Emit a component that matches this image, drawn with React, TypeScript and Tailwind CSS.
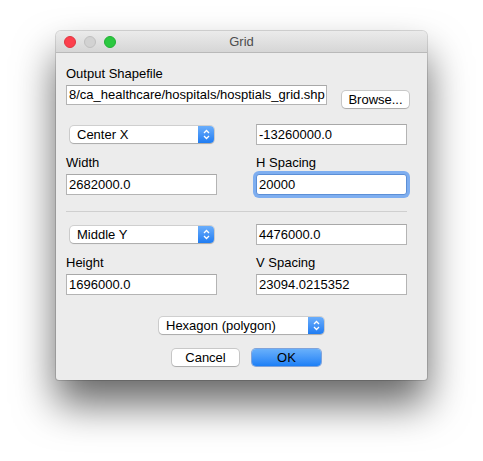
import React from "react";

const font = { fontFamily: '"Liberation Sans", Arial, sans-serif' };

function Field({ value, w, h = "h-[21px]", focused = false }: { value: string; w: string; h?: string; focused?: boolean }) {
  if (focused) {
    return (
      <div className={`${w} ${h} rounded-[3px] shadow-[0_0_0_3px_#7eaef0] border border-[#5c8fd6] bg-white flex items-center pl-[2px] text-[13px] text-black`}>
        {value}
      </div>
    );
  }
  return (
    <div className={`${w} ${h} border border-[#b4b4b4] border-t-[#a8a8a8] bg-white flex items-center pl-[2px] text-[13px] text-black`}>
      {value}
    </div>
  );
}

function Popup({ label, w }: { label: string; w: string }) {
  return (
    <div className={`${w} h-[17px] rounded-[4px] bg-white flex items-stretch shadow-[0_0_0_1px_rgba(0,0,0,0.12),0_1px_1px_rgba(0,0,0,0.18)]`}>
      <div className="flex-1 flex items-center pl-[7px] text-[13px] text-black">{label}</div>
      <div className="w-[16px] rounded-r-[4px] bg-gradient-to-b from-[#69adfb] to-[#1d7cf2] flex items-center justify-center">
        <svg width="7" height="11" viewBox="0 0 7 11">
          <path d="M1 4 L3.5 1.5 L6 4" stroke="white" strokeWidth="1.3" fill="none" />
          <path d="M1 7 L3.5 9.5 L6 7" stroke="white" strokeWidth="1.3" fill="none" />
        </svg>
      </div>
    </div>
  );
}

export default function App() {
  return (
    <div className="w-[483px] h-[461px] bg-white pl-[56px] pt-[31px]" style={font}>
      <div className="w-[371px] h-[349px] bg-[#ececec] rounded-t-[5px] rounded-b-[3px] shadow-[0_0_0_1px_rgba(0,0,0,0.14),0_24px_40px_rgba(0,0,0,0.6)] flex flex-col">
        {/* title bar */}
        <div className="h-[22px] rounded-t-[5px] bg-gradient-to-b from-[#ebebeb] to-[#d6d6d6] border-b border-[#b9b9b9] flex items-center relative">
          <div className="flex gap-[8px] pl-[8px]">
            <div className="w-[12px] h-[12px] rounded-full bg-[#fc3f4d] border border-[#e0353f]" />
            <div className="w-[12px] h-[12px] rounded-full bg-[#d2d2d2] border border-[#c0c0c0]" />
            <div className="w-[12px] h-[12px] rounded-full bg-[#2bc840] border border-[#21b133]" />
          </div>
          <div className="absolute inset-0 flex items-center justify-center pt-[1px] text-[13px] text-[#4d4d4d]">Grid</div>
        </div>

        <div className="flex flex-col pl-[10px]">
          <div className="mt-[13px] h-[16px] leading-[16px] text-[13px] text-black">Output Shapefile</div>
          <div className="mt-[3px] h-[20px] flex items-start">
            <Field w="w-[261px]" h="h-[20px]" value="8/ca_healthcare/hospitals/hosptials_grid.shp" />
            <div className="ml-[15px] mt-[6px] shrink-0 w-[67px] h-[17px] rounded-[4px] bg-white flex items-center justify-center text-[13px] text-black shadow-[0_0_0_1px_rgba(0,0,0,0.15),0_1px_1px_rgba(0,0,0,0.15)]">
              Browse...
            </div>
          </div>

          {/* X section */}
          <div className="mt-[19px] flex items-center">
            <div className="ml-[4px]">
              <Popup w="w-[144px]" label="Center X" />
            </div>
            <div className="ml-[42px]">
              <Field w="w-[151px]" value="-13260000.0" />
            </div>
          </div>
          <div className="mt-[10px] flex">
            <div className="w-[190px] flex flex-col">
              <div className="h-[16px] leading-[16px] text-[13px] text-black">Width</div>
              <div className="mt-[3px]">
                <Field w="w-[151px]" value="2682000.0" />
              </div>
            </div>
            <div className="flex flex-col">
              <div className="h-[16px] leading-[16px] text-[13px] text-black">H Spacing</div>
              <div className="mt-[3px]">
                <Field w="w-[151px]" value="20000" focused />
              </div>
            </div>
          </div>

          <div className="mt-[16px] w-[341px] h-[1px] bg-[#cfcfcf]" />

          {/* Y section */}
          <div className="mt-[12px] flex items-center">
            <div className="ml-[4px]">
              <Popup w="w-[144px]" label="Middle Y" />
            </div>
            <div className="ml-[42px]">
              <Field w="w-[151px]" value="4476000.0" />
            </div>
          </div>
          <div className="mt-[10px] flex">
            <div className="w-[190px] flex flex-col">
              <div className="h-[16px] leading-[16px] text-[13px] text-black">Height</div>
              <div className="mt-[3px]">
                <Field w="w-[151px]" value="1696000.0" />
              </div>
            </div>
            <div className="flex flex-col">
              <div className="h-[16px] leading-[16px] text-[13px] text-black">V Spacing</div>
              <div className="mt-[3px]">
                <Field w="w-[151px]" value="23094.0215352" />
              </div>
            </div>
          </div>

          <div className="mt-[22px] ml-[93px]">
            <Popup w="w-[165px]" label="Hexagon (polygon)" />
          </div>

          <div className="mt-[15px] ml-[106px] flex gap-[13px]">
            <div className="w-[67px] h-[17px] rounded-[4px] bg-white flex items-center justify-center text-[13px] text-black shadow-[0_0_0_1px_rgba(0,0,0,0.15),0_1px_1px_rgba(0,0,0,0.15)]">
              Cancel
            </div>
            <div className="w-[69px] h-[17px] rounded-[4px] bg-gradient-to-b from-[#68b0fb] to-[#1a7ff6] flex items-center justify-center text-[13px] text-black shadow-[0_0_0_1px_rgba(20,90,200,0.5)]">
              OK
            </div>
          </div>
        </div>
      </div>
    </div>
  );
}
